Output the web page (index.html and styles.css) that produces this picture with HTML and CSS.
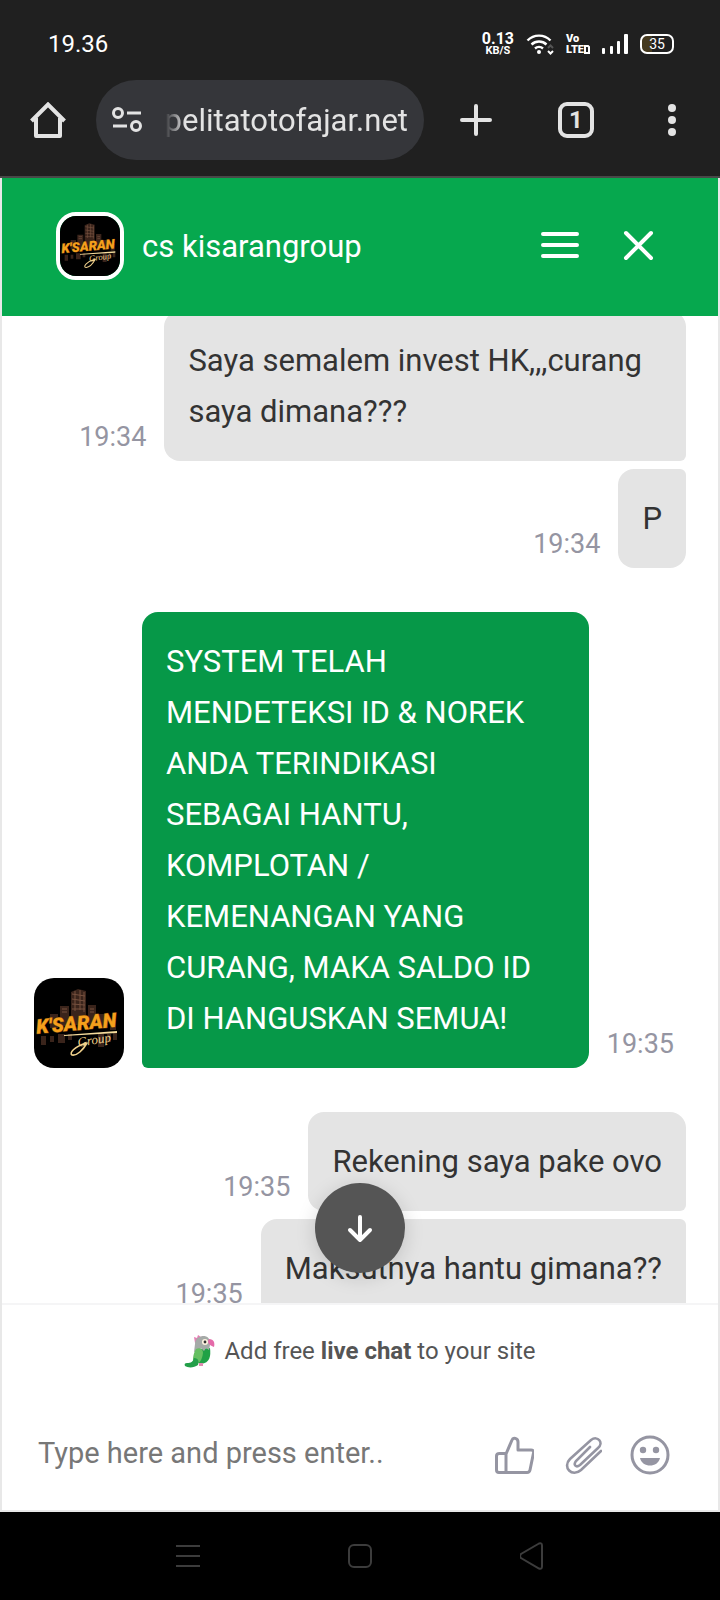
FILE: index.html
```
<!DOCTYPE html>
<html lang="id">
  <head>
    <meta charset="UTF-8" />
    <meta name="viewport" content="width=device-width, initial-scale=1.0" />
    <title>cs kisarangroup</title>
    <link rel="stylesheet" href="styles.css">
  </head>
  <body>
    <!-- logo, dipakai di header dan di pesan -->
    <svg class="defs" width="0" height="0" aria-hidden="true">
      <symbol id="logo" viewBox="0 0 90 90">
        <rect width="90" height="90" fill="#000" />
        <g fill="#3a241b">
          <path d="M37 14l7-3 8 2v34H37z" />
          <path d="M26 28h9v20h-9zM54 27h8v20h-8zM16 36h8v14h-8zM64 36h10v14H64zM76 42h6v10h-6z" />
          <path d="M7 58h5v9H7zM16 58h4v6h-4zM24 56h7v9h-7zM34 56h4v6h-4zM64 56h6v13h-6zM73 56h4v8h-4zM79 55h4v7h-4z" />
        </g>
        <path d="M38 16l13 2M38 21l13 2M38 26l13 1M38 31h13M41 13v20M46 12v20M50 14v20M28 31h5M28 34h5M56 31h4M56 34h4" fill="none" stroke="#76513f" stroke-width="1" />
        <g transform="rotate(-5 45 45)">
          <text class="logo-text" x="2" y="52">K'SARAN</text>
        </g>
        <path d="M30 57l53-4v2l-53 3z" fill="#f6dc9c" />
        <g transform="rotate(-9 55 66)">
          <text class="logo-script" x="44" y="67">Group</text>
        </g>
        <path d="M53 65c-4 7-10 13-15 12-3-2 2-8 14-12" fill="none" stroke="#f0d18c" stroke-width="1.6" stroke-linecap="round" />
      </symbol>
    </svg>

    <div class="status">
      <span class="clock">19.36</span>
      <div class="status-icons">
        <div class="speed"><b>0.13</b><small>KB/S</small></div>
        <svg width="28" height="22" viewBox="0 0 28 22" fill="none" stroke="#fff" stroke-width="2.4">
          <path d="M1.5 7.500a16 16 0 0 1 23 0M5.500 11.500a11 11 0 0 1 15 0M9 15.500a6 6 0 0 1 8 0" />
          <circle cx="13" cy="19" r="2" fill="#fff" stroke="none" />
          <path d="M22 15l2.500-2.500L27 15" stroke="#555" stroke-width="2" />
          <path d="M22 18l2.500 2.500L27 18" stroke-width="2" />
        </svg>
        <div class="volte">
          <span>Vo</span>
          <span class="lte">LTE
            <svg width="6" height="9" viewBox="0 0 6 9" fill="none" stroke="#fff" stroke-width="2">
              <path d="M1 1h3l1 1v6H1z" />
            </svg>
          </span>
        </div>
        <svg width="26" height="20" viewBox="0 0 26 20" fill="#fff">
          <rect x="0" y="14" width="3" height="6" rx="1" />
          <rect x="8" y="12" width="3" height="8" rx="1" />
          <rect x="15" y="7" width="3" height="13" rx="1" />
          <rect x="22" y="0" width="4" height="20" rx="1" />
        </svg>
        <div class="battery">35</div>
      </div>
    </div>

    <nav class="toolbar">
      <button type="button" class="home" aria-label="Home">
        <svg width="36" height="36" viewBox="0 0 36 36" fill="none" stroke="#e3e3e3" stroke-width="4">
          <path d="M1.500 19L18 2.500 34.500 19" stroke-linejoin="miter" />
          <path d="M6 16v18h24V16" stroke-linejoin="round" />
        </svg>
      </button>
      <div class="address">
        <svg width="30" height="26" viewBox="0 0 30 26" fill="none" stroke="#e3e3e3" stroke-width="3">
          <circle cx="6" cy="6" r="4.500" />
          <path d="M15 6h14M1 19h14" />
          <circle cx="24" cy="19" r="4.500" />
        </svg>
        <span class="url">pelitatotofajar.net</span>
      </div>
      <button type="button" class="plus" aria-label="Tab baru">
        <svg width="32" height="32" viewBox="0 0 32 32" stroke="#e3e3e3" stroke-width="4" stroke-linecap="round">
          <path d="M2 16h28M16 2v28" />
        </svg>
      </button>
      <button type="button"><span class="tabs">1</span></button>
      <button type="button" aria-label="Menu browser">
        <svg width="8" height="32" viewBox="0 0 8 32" fill="#e3e3e3">
          <circle cx="4" cy="4" r="4" />
          <circle cx="4" cy="16" r="4" />
          <circle cx="4" cy="28" r="4" />
        </svg>
      </button>
    </nav>

    <main>
      <header>
        <svg class="photo"><use href="#logo" /></svg>
        <h1>cs kisarangroup</h1>
        <button type="button" aria-label="Menu">
          <svg width="40" height="40" viewBox="0 0 40 40" stroke="#fff" stroke-width="4" stroke-linecap="round">
            <path d="M3 8h34M3 19h34M3 30h34" />
          </svg>
        </button>
        <button type="button" aria-label="Tutup">
          <svg width="40" height="40" viewBox="0 0 40 40" stroke="#fff" stroke-width="4" stroke-linecap="round">
            <path d="M8 7l25 25M33 7L8 32" />
          </svg>
        </button>
      </header>

      <section class="chat">
        <div class="messages">
          <div class="row me">
            <time>19:34</time>
            <p class="first">Saya semalem invest HK,,,curang saya dimana???</p>
          </div>
          <div class="row me">
            <time>19:34</time>
            <p class="last">P</p>
          </div>
          <div class="row agent">
            <svg class="avatar"><use href="#logo" /></svg>
            <p>SYSTEM TELAH MENDETEKSI ID &amp; NOREK ANDA TERINDIKASI SEBAGAI HANTU, KOMPLOTAN / KEMENANGAN YANG CURANG, MAKA SALDO ID DI HANGUSKAN SEMUA!</p>
            <time>19:35</time>
          </div>
          <div class="row me">
            <time>19:35</time>
            <p class="first">Rekening saya pake ovo</p>
          </div>
          <div class="row me">
            <time>19:35</time>
            <p>Maksutnya hantu gimana??</p>
          </div>
        </div>
        <button type="button" class="down" aria-label="Pesan terbaru">
          <svg width="32" height="32" viewBox="0 0 32 32" fill="none" stroke="#fff" stroke-width="4" stroke-linecap="round" stroke-linejoin="round">
            <path d="M16 5v23M6 18l10 10 10-10" />
          </svg>
        </button>
      </section>

      <footer>
        <a class="brand" href="#">
          <svg width="32" height="34" viewBox="0 0 32 34">
            <path d="M11 9L10 3l3 1 1-3 3 2 4-1v5z" fill="#e57fb5" />
            <path d="M14 15l12-1c1 8 0 15-9 16-5-1-7-7-3-15z" fill="#1fa145" />
            <path d="M11 10c0-6 5-8 9-8 4 0 7 4 6 9l-1 5-3-2-2 3-3-3-3 3-4 1z" fill="#a5aaa7" />
            <path d="M12 15c4-2 7 0 7 4-1 8-4 11-9 11-2-3-1-10 2-15z" fill="#66bf62" />
            <path d="M10 24c5 0 5 4 4 7-4 3-10 3-13 1-1-2 0-3 2-3 4 0 6-1 7-5z" fill="#239f49" />
            <path d="M25 5c5 0 6 4 5 8-3-1-6-3-6-6z" fill="#e46aa9" />
            <path d="M15 29h4v3h-4z" fill="#df8cb1" />
            <circle cx="21" cy="8" r="3" fill="#fff5e1" />
            <circle cx="21" cy="8" r="1.400" fill="#333" />
          </svg>
          <span>Add free <b>live chat</b> to your site</span>
        </a>
        <form class="compose">
          <input type="text" aria-label="Pesan" placeholder="Type here and press enter.." />
          <button type="button" aria-label="Suka">
            <svg width="40" height="40" viewBox="0 0 40 40" fill="none" stroke="#9595a2" stroke-width="3" stroke-linejoin="round">
              <path d="M12 19l6-14c1-3 6-2 6 2v8h13c2 0 3 1 2.500 3L36 35c-.4 2-1 2.500-3 2.500H5c-2 0-2.500-1-2.500-2.500V21c0-2 1-2.500 3-2.500h6.500M12 19v18" />
            </svg>
          </button>
          <button type="button" aria-label="Lampiran">
            <svg width="40" height="40" viewBox="0 0 40 40" fill="none" stroke="#9595a2" stroke-width="2.600" stroke-linecap="round">
              <path d="M28 12L14 26c-3 4 0 7 4 4L36 13c6-5 0-13-7-8L8 24c-8 8 2 19 11 11l20-19" />
            </svg>
          </button>
          <button type="button" aria-label="Emoji">
            <svg width="40" height="40" viewBox="0 0 40 40" fill="#9595a2">
              <circle cx="20" cy="20" r="18" fill="none" stroke="#9595a2" stroke-width="3" />
              <circle cx="13" cy="15" r="3.200" />
              <circle cx="26" cy="15" r="3.200" />
              <path d="M10 23h20c-2 10-18 10-20 0z" />
            </svg>
          </button>
        </form>
      </footer>
    </main>

    <nav class="keys">
      <button type="button" aria-label="Aplikasi terakhir">
        <svg width="24" height="24" viewBox="0 0 24 24" stroke="#3c3c3c" stroke-width="2">
          <path d="M0 2h24M0 12h24M0 22h24" />
        </svg>
      </button>
      <button type="button" aria-label="Beranda">
        <svg width="24" height="24" viewBox="0 0 24 24" fill="none" stroke="#3c3c3c" stroke-width="2">
          <rect x="1" y="1" width="22" height="22" rx="5" />
        </svg>
      </button>
      <button type="button" aria-label="Kembali">
        <svg width="24" height="28" viewBox="0 0 24 28" fill="none" stroke="#3c3c3c" stroke-width="2">
          <path d="M19 1.500L1 12q-2 2 0 4l18 10.500q3 1 3-2v-21q0-3-3-2z" />
        </svg>
      </button>
    </nav>
  </body>
</html>
```

FILE: styles.css
```
* {
  margin: 0;
  padding: 0;
  box-sizing: border-box;
}
body {
  height: 100vh;
  display: flex;
  flex-flow: column;
  background-color: #000;
  font-family: Roboto, "Noto Sans", sans-serif;
}
svg {
  display: block;
  flex-shrink: 0;
}
button {
  display: flex;
  align-items: center;
  justify-content: center;
  border: none;
  background: none;
  font-family: inherit;
  cursor: pointer;
}
.defs {
  position: absolute;
}

/* status bar */
.status {
  height: 80px;
  padding: 8px 46px 0 48px;
  display: flex;
  align-items: center;
  justify-content: space-between;
  background-color: #202020;
  color: #fff;
}
.clock {
  font-size: 24px;
}
.status-icons {
  display: flex;
  align-items: center;
  gap: 12px;
}
.speed {
  display: flex;
  flex-flow: column;
  align-items: center;
  font-size: 16px;
  line-height: 13px;
}
.speed small {
  font-size: 11px;
  font-weight: bold;
  line-height: 12px;
}
.volte {
  display: flex;
  flex-flow: column;
  font-size: 11px;
  font-weight: 900;
  line-height: 11px;
}
.lte {
  display: flex;
  align-items: center;
}
.battery {
  width: 34px;
  height: 20px;
  border: 2px solid #fff;
  border-radius: 7px;
  background: linear-gradient(to right, #45391f 35%, #202020 35%);
  font-size: 14px;
  line-height: 16px;
  text-align: center;
}

/* browser */
.toolbar {
  height: 98px;
  padding-bottom: 16px;
  display: flex;
  align-items: center;
  background-color: #202020;
  border-bottom: 2px solid #484848;
}
.toolbar button {
  width: 96px;
  height: 80px;
}
.toolbar .plus {
  width: 104px;
}
.address {
  flex: 1;
  height: 80px;
  padding: 0 16px;
  display: flex;
  align-items: center;
  justify-content: space-between;
  border-radius: 40px;
  background-color: #35363a;
}
.url {
  color: #e3e3e3;
  font-size: 31px;
  mask-image: linear-gradient(to right, transparent, #000 20px);
}
.tabs {
  width: 36px;
  height: 36px;
  border: 4px solid #e3e3e3;
  border-radius: 9px;
  color: #e3e3e3;
  font-size: 24px;
  font-weight: bold;
  line-height: 28px;
}

/* chat */
main {
  flex: 1;
  min-height: 0;
  display: flex;
  flex-flow: column;
  border: 2px solid #e8e8e8;
  border-top: none;
  background-color: #fff;
}
header {
  height: 138px;
  padding: 0 60px 2px 54px;
  display: flex;
  align-items: center;
  background-color: #06a84e;
  color: #fff;
}
header h1 {
  flex: 1;
  margin-left: 18px;
  font-size: 31px;
  font-weight: normal;
}
header button {
  margin-left: 38px;
}
.photo {
  width: 68px;
  height: 68px;
  border: 4px solid #fff;
  border-radius: 20px;
}
.logo-text {
  fill: #f5a01c;
  stroke: #6b3d0c;
  stroke-width: 1px;
  paint-order: stroke;
  font-size: 20px;
  font-weight: 900;
  font-style: italic;
}
.logo-script {
  fill: #f0d18c;
  font-family: "Liberation Serif", serif;
  font-size: 13px;
  font-style: italic;
}
.chat {
  position: relative;
  flex: 1;
  min-height: 0;
  overflow: hidden;
}
/* percakapan sudah digulir sedikit */
.messages {
  margin-top: -5px;
  padding: 0 32px;
}
.row {
  display: flex;
  align-items: flex-end;
  gap: 18px;
  margin-bottom: 8px;
}
.row p {
  padding: 24px;
  border-radius: 16px;
  font-size: 31px;
  line-height: 51px;
}
.row time {
  margin-bottom: 9px;
  color: #9595a2;
  font-size: 27px;
  line-height: 30px;
}
.me {
  justify-content: flex-end;
}
.me p {
  max-width: 80%;
  border-radius: 16px 6px 6px 16px;
  background-color: #e4e4e4;
  color: #333;
}
.me .first {
  border-top-right-radius: 16px;
}
.me .last {
  border-bottom-right-radius: 16px;
}
.agent {
  margin: 44px 0;
  padding-right: 12px;
}
.agent p {
  border-bottom-left-radius: 6px;
  background-color: #069848;
  color: #fff;
}
.avatar {
  width: 90px;
  height: 90px;
  border-radius: 20px;
}
.down {
  position: absolute;
  bottom: 30px;
  left: calc(50% - 45px);
  width: 90px;
  height: 90px;
  border-radius: 50%;
  background-color: #555;
  box-shadow: 0 4px 20px rgba(0, 0, 0, 0.15);
}

/* footer */
footer {
  border-top: 2px solid #f5f5f6;
}
.brand {
  height: 95px;
  padding-bottom: 4px;
  display: flex;
  align-items: center;
  justify-content: center;
  gap: 8px;
  color: #555;
  font-size: 24px;
  text-decoration: none;
}
.compose {
  height: 110px;
  padding: 0 48px 0 36px;
  display: flex;
  align-items: center;
  gap: 28px;
}
.compose input {
  flex: 1;
  min-width: 0;
  padding-bottom: 4px;
  border: none;
  outline: none;
  font-family: inherit;
  font-size: 29px;
}
.compose input::placeholder {
  color: #777;
}

/* tombol android */
.keys {
  height: 88px;
  display: flex;
  align-items: center;
  justify-content: center;
  gap: 148px;
}
```
